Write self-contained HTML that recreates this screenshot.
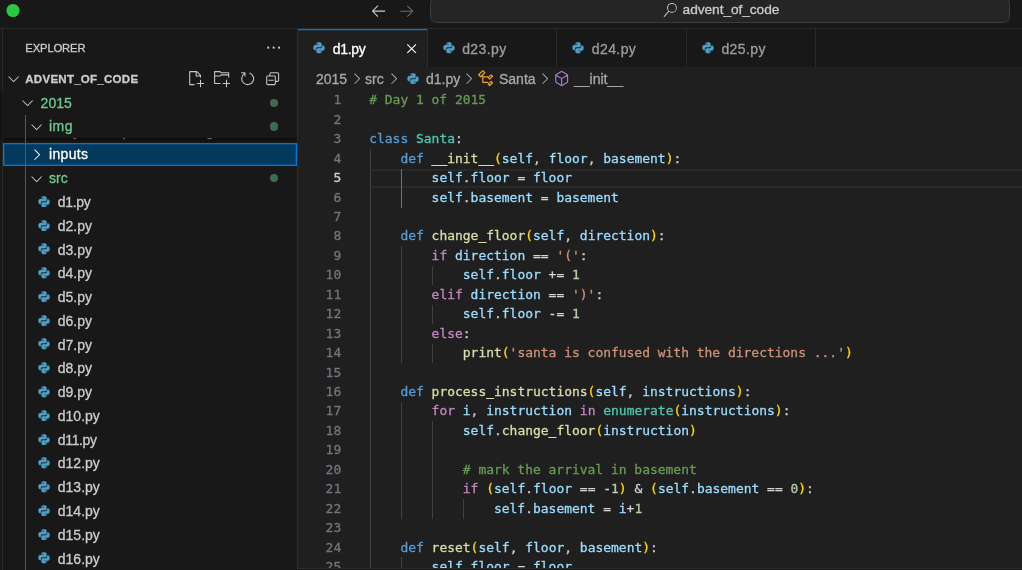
<!DOCTYPE html>
<html lang="en"><head><meta charset="utf-8"><title>d1.py — advent_of_code</title>
<style>
*{box-sizing:border-box;margin:0;padding:0}
html,body{width:1022px;height:570px;overflow:hidden;background:#1f1f1f}
body{position:relative;-webkit-text-stroke:0.3px;font-family:"Liberation Sans",sans-serif;font-size:14px;color:#cccccc;-webkit-font-smoothing:antialiased}
#root{position:absolute;left:0;top:0;width:1022px;height:570px;will-change:transform}
.abs,svg.ic,svg.py,.t{position:absolute}
.t{white-space:pre;line-height:1}
#title{position:absolute;left:0;top:0;width:1022px;height:29px;background:#181818;border-bottom:1px solid #2b2b2b}
#side{position:absolute;left:0;top:29px;width:298px;height:541px;background:#181818;border-right:1px solid #2b2b2b;overflow:hidden}
#ab{position:absolute;left:0;top:0;width:3px;height:541px;border-right:1px solid #2b2b2b}
#tabs{position:absolute;left:298px;top:29px;width:724px;height:37.8px;background:#181818}
.tab{position:absolute;top:0;height:37.8px;width:129.6px;border-right:1px solid #2b2b2b;color:#9d9d9d}
.tab.on{background:#1f1f1f;color:#ffffff}
.tab.on:before{content:'';position:absolute;left:0;top:0;width:128.6px;height:1px;background:#0078d4}
.tab.on:after{content:'';position:absolute;left:0;top:1px;width:128.6px;height:1px;background:rgba(0,120,212,.28)}
.row{position:absolute;left:3px;width:294px;height:23.77px}
.lbl{position:absolute;white-space:pre;line-height:23.77px;top:0.75px}
.g{color:#73c991}
.dot{position:absolute;width:8.4px;height:8.4px;border-radius:50%;background:#3f6b50}
#code{position:absolute;left:298px;top:90.9px;width:724px;height:477.1px;overflow:hidden;font-family:"DejaVu Sans Mono","Liberation Mono",monospace;font-size:12.96px}
.ln{position:absolute;left:0;width:43.2px;text-align:right;color:#6e7681;height:19.44px;line-height:19.44px;white-space:pre}
.ld{position:absolute;left:71.2px;height:19.44px;line-height:19.44px;white-space:pre}
.ig{position:absolute;width:1px;background:#404040}
.bc{position:absolute;top:67.8px;height:23.8px;line-height:23.8px;white-space:pre;color:#a9a9a9}
.cm{color:#6a9955}.kw{color:#569cd6}.cl{color:#4ec9b0}.fn{color:#dcdcaa}.v{color:#9cdcfe}.p{color:#cccccc}.ct{color:#c586c0}.s{color:#ce9178}.n{color:#b5cea8}.b{color:#ffd700}.o{color:#d4d4d4}</style></head><body><div id="root">
<div id="title"><svg class="ic" viewBox="0 0 30 24" style="left:0;top:0;width:30px;height:24px"><circle cx="13" cy="10.5" r="6.55" fill="#28c840"/></svg><svg class="ic" viewBox="0 0 16 16" style="left:369.9px;top:1.5px;width:17.3px;height:17.3px"><path fill="#cccccc" d="M7 3.093l-5 5V8.8l5 5 .707-.707-4.146-4.147H14v-1H3.56L7.708 3.8 7 3.093z"/></svg><svg class="ic" viewBox="0 0 16 16" style="left:398.4px;top:1.5px;width:17.3px;height:17.3px"><path fill="#6b6b6b" d="M9 13.887l5-5V8.18l-5-5-.707.707 4.146 4.147H2v1h10.44L8.292 13.18l.707.707z"/></svg><div class="abs" style="left:429.5px;top:-3px;width:580px;height:25.5px;border:1px solid #3c3c3c;border-radius:6.5px;background:#252525"></div><svg class="ic" viewBox="0 0 24 24" style="left:662.9px;top:2.9px;width:14.2px;height:14.2px"><path fill="#cccccc" d="M15.25 0a8.25 8.25 0 0 0-6.18 13.72L1 22.88l1.12 1.12 8.05-9.12A8.251 8.251 0 1 0 15.25.01V0zm0 15a6.75 6.75 0 1 1 0-13.5 6.75 6.75 0 0 1 0 13.5z"/></svg><span class="t" style="left:682.6px;top:1.9px;font-size:13.7px;line-height:16px;letter-spacing:-0.05px;color:#cccccc">advent_of_code</span></div>
<div id="side"><div id="ab"></div><span class="t" style="left:25.3px;top:13.0px;font-size:11.2px;line-height:12px;letter-spacing:-0.1px;color:#cccccc">EXPLORER</span><svg class="ic" viewBox="0 0 16 16" style="left:264.6px;top:10.3px;width:17.3px;height:17.3px"><path fill="#cccccc" d="M4 8a1 1 0 1 1-2 0 1 1 0 0 1 2 0zm5 0a1 1 0 1 1-2 0 1 1 0 0 1 2 0zm5 0a1 1 0 1 1-2 0 1 1 0 0 1 2 0z"/></svg><div class="row" style="top:89.84px"><svg class="py" viewBox="1.7 1.7 28.6 28.6" preserveAspectRatio="none" style="left:35.0px;top:5.6px;width:12.0px;height:11.6px"><path fill="#4f9fc6" stroke="#4f9fc6" stroke-width="0.35" stroke-linejoin="round" d="M15.6 2.5c-6 0-5.7 2.6-5.7 2.6v2.9h5.9v.9H6.900c0 0-4.400-.5-4.400 6.300s3.800 6.600 3.800 6.600h2.300v-3.200s-.1-3.800 3.700-3.800h6.300s3.600.1 3.600-3.500V6.100s.5-3.600-6.600-3.600zm-3.600 2c.6 0 1.100.5 1.100 1.100s-.5 1.100-1.100 1.100-1.100-.5-1.100-1.100.5-1.100 1.100-1.100z"/><path fill="#4f9fc6" stroke="#4f9fc6" stroke-width="0.35" stroke-linejoin="round" d="M16.400 29.500c6 0 5.700-2.600 5.700-2.600v-2.900h-5.900v-.9h8.900s4.400.5 4.400-6.300-3.800-6.600-3.800-6.600h-2.300v3.200s.1 3.800-3.700 3.800h-6.300s-3.600-.1-3.600 3.500v5.200s-.5 3.600 6.600 3.600zm3.600-2c-.6 0-1.100-.5-1.100-1.100s.5-1.100 1.100-1.100 1.100.5 1.100 1.100-.5 1.100-1.100 1.100z"/></svg><span class="lbl" style="left:54.8px">day08 lamp animations.gif</span></div><div class="row" style="top:113.61px;background:#04395e;box-shadow:inset 0 0 0 1px #0078d4,inset 0 0 0 2px rgba(0,120,212,.35)"><svg class="ic" viewBox="0 0 16 16" style="left:24.8px;top:3.2px;width:17.3px;height:17.3px"><path fill="#ffffff" d="M10.072 8.024L5.715 3.667l.618-.62L11 7.716v.618L6.333 13l-.618-.619 4.357-4.357z"/></svg><span class="lbl" style="left:46.0px;color:#ffffff;letter-spacing:0.35px">inputs</span></div><div class="row" style="top:137.42px"><svg class="ic" viewBox="0 0 16 16" style="left:24.8px;top:3.2px;width:17.3px;height:17.3px"><path fill="#cccccc" d="M7.976 10.072l4.357-4.357.62.618L8.284 11h-.618L3 6.333l.619-.618 4.357 4.357z"/></svg><span class="lbl g" style="left:46.0px">src</span><div class="dot" style="left:266.8px;top:7.7px"></div></div><div class="row" style="top:161.22px"><svg class="py" viewBox="1.7 1.7 28.6 28.6" preserveAspectRatio="none" style="left:35.0px;top:5.6px;width:12.0px;height:11.6px"><path fill="#4f9fc6" stroke="#4f9fc6" stroke-width="0.35" stroke-linejoin="round" d="M15.6 2.5c-6 0-5.7 2.6-5.7 2.6v2.9h5.9v.9H6.900c0 0-4.400-.5-4.400 6.300s3.800 6.600 3.800 6.600h2.300v-3.200s-.1-3.800 3.700-3.800h6.300s3.600.1 3.600-3.500V6.100s.5-3.600-6.600-3.600zm-3.600 2c.6 0 1.100.5 1.100 1.100s-.5 1.100-1.100 1.100-1.100-.5-1.100-1.100.5-1.100 1.100-1.100z"/><path fill="#4f9fc6" stroke="#4f9fc6" stroke-width="0.35" stroke-linejoin="round" d="M16.400 29.500c6 0 5.700-2.600 5.700-2.600v-2.900h-5.900v-.9h8.900s4.400.5 4.400-6.300-3.800-6.600-3.800-6.600h-2.300v3.200s.1 3.800-3.700 3.800h-6.300s-3.600-.1-3.600 3.500v5.200s-.5 3.600 6.600 3.600zm3.600-2c-.6 0-1.100-.5-1.100-1.100s.5-1.100 1.100-1.100 1.100.5 1.100 1.100-.5 1.100-1.100 1.100z"/></svg><span class="lbl" style="left:54.8px;letter-spacing:-0.3px">d1.py</span></div><div class="row" style="top:184.99px"><svg class="py" viewBox="1.7 1.7 28.6 28.6" preserveAspectRatio="none" style="left:35.0px;top:5.6px;width:12.0px;height:11.6px"><path fill="#4f9fc6" stroke="#4f9fc6" stroke-width="0.35" stroke-linejoin="round" d="M15.6 2.5c-6 0-5.7 2.6-5.7 2.6v2.9h5.9v.9H6.900c0 0-4.400-.5-4.400 6.300s3.800 6.600 3.800 6.600h2.300v-3.200s-.1-3.800 3.700-3.800h6.300s3.600.1 3.600-3.500V6.100s.5-3.600-6.600-3.600zm-3.600 2c.6 0 1.100.5 1.100 1.100s-.5 1.100-1.100 1.100-1.100-.5-1.100-1.100.5-1.100 1.100-1.100z"/><path fill="#4f9fc6" stroke="#4f9fc6" stroke-width="0.35" stroke-linejoin="round" d="M16.400 29.500c6 0 5.700-2.600 5.700-2.600v-2.900h-5.900v-.9h8.900s4.400.5 4.400-6.300-3.800-6.600-3.800-6.600h-2.300v3.200s.1 3.800-3.700 3.800h-6.300s-3.600-.1-3.600 3.500v5.200s-.5 3.600 6.600 3.600zm3.600-2c-.6 0-1.100-.5-1.100-1.100s.5-1.100 1.100-1.100 1.100.5 1.100 1.100-.5 1.100-1.100 1.100z"/></svg><span class="lbl" style="left:54.8px">d2.py</span></div><div class="row" style="top:208.75px"><svg class="py" viewBox="1.7 1.7 28.6 28.6" preserveAspectRatio="none" style="left:35.0px;top:5.6px;width:12.0px;height:11.6px"><path fill="#4f9fc6" stroke="#4f9fc6" stroke-width="0.35" stroke-linejoin="round" d="M15.6 2.5c-6 0-5.7 2.6-5.7 2.6v2.9h5.9v.9H6.900c0 0-4.400-.5-4.400 6.300s3.800 6.600 3.800 6.600h2.300v-3.200s-.1-3.800 3.700-3.800h6.300s3.600.1 3.600-3.500V6.100s.5-3.600-6.600-3.600zm-3.600 2c.6 0 1.100.5 1.100 1.100s-.5 1.100-1.100 1.100-1.100-.5-1.100-1.100.5-1.100 1.100-1.100z"/><path fill="#4f9fc6" stroke="#4f9fc6" stroke-width="0.35" stroke-linejoin="round" d="M16.400 29.500c6 0 5.700-2.600 5.700-2.600v-2.900h-5.900v-.9h8.900s4.400.5 4.400-6.300-3.800-6.600-3.800-6.600h-2.300v3.200s.1 3.800-3.700 3.800h-6.300s-3.600-.1-3.600 3.500v5.200s-.5 3.600 6.600 3.600zm3.600-2c-.6 0-1.100-.5-1.100-1.100s.5-1.100 1.100-1.100 1.100.5 1.100 1.100-.5 1.100-1.100 1.100z"/></svg><span class="lbl" style="left:54.8px">d3.py</span></div><div class="row" style="top:232.52px"><svg class="py" viewBox="1.7 1.7 28.6 28.6" preserveAspectRatio="none" style="left:35.0px;top:5.6px;width:12.0px;height:11.6px"><path fill="#4f9fc6" stroke="#4f9fc6" stroke-width="0.35" stroke-linejoin="round" d="M15.6 2.5c-6 0-5.7 2.6-5.7 2.6v2.9h5.9v.9H6.900c0 0-4.400-.5-4.400 6.300s3.800 6.600 3.800 6.600h2.300v-3.200s-.1-3.800 3.700-3.800h6.300s3.600.1 3.600-3.500V6.100s.5-3.600-6.600-3.600zm-3.600 2c.6 0 1.100.5 1.100 1.100s-.5 1.100-1.100 1.100-1.100-.5-1.100-1.100.5-1.100 1.100-1.100z"/><path fill="#4f9fc6" stroke="#4f9fc6" stroke-width="0.35" stroke-linejoin="round" d="M16.400 29.500c6 0 5.700-2.600 5.700-2.600v-2.900h-5.900v-.9h8.900s4.400.5 4.400-6.300-3.800-6.600-3.800-6.600h-2.300v3.200s.1 3.800-3.700 3.800h-6.300s-3.600-.1-3.600 3.500v5.200s-.5 3.600 6.600 3.600zm3.600-2c-.6 0-1.100-.5-1.100-1.100s.5-1.100 1.100-1.100 1.100.5 1.100 1.100-.5 1.100-1.100 1.100z"/></svg><span class="lbl" style="left:54.8px">d4.py</span></div><div class="row" style="top:256.30px"><svg class="py" viewBox="1.7 1.7 28.6 28.6" preserveAspectRatio="none" style="left:35.0px;top:5.6px;width:12.0px;height:11.6px"><path fill="#4f9fc6" stroke="#4f9fc6" stroke-width="0.35" stroke-linejoin="round" d="M15.6 2.5c-6 0-5.7 2.6-5.7 2.6v2.9h5.9v.9H6.900c0 0-4.400-.5-4.400 6.300s3.800 6.600 3.800 6.600h2.300v-3.200s-.1-3.800 3.700-3.800h6.300s3.600.1 3.600-3.500V6.100s.5-3.600-6.600-3.600zm-3.600 2c.6 0 1.100.5 1.100 1.100s-.5 1.100-1.100 1.100-1.100-.5-1.100-1.100.5-1.100 1.100-1.100z"/><path fill="#4f9fc6" stroke="#4f9fc6" stroke-width="0.35" stroke-linejoin="round" d="M16.400 29.500c6 0 5.700-2.600 5.700-2.600v-2.900h-5.900v-.9h8.900s4.400.5 4.400-6.300-3.800-6.600-3.800-6.600h-2.300v3.200s.1 3.800-3.700 3.800h-6.300s-3.600-.1-3.600 3.500v5.200s-.5 3.600 6.600 3.600zm3.600-2c-.6 0-1.100-.5-1.100-1.100s.5-1.100 1.100-1.100 1.100.5 1.100 1.100-.5 1.100-1.100 1.100z"/></svg><span class="lbl" style="left:54.8px">d5.py</span></div><div class="row" style="top:280.06px"><svg class="py" viewBox="1.7 1.7 28.6 28.6" preserveAspectRatio="none" style="left:35.0px;top:5.6px;width:12.0px;height:11.6px"><path fill="#4f9fc6" stroke="#4f9fc6" stroke-width="0.35" stroke-linejoin="round" d="M15.6 2.5c-6 0-5.7 2.6-5.7 2.6v2.9h5.9v.9H6.900c0 0-4.400-.5-4.400 6.300s3.800 6.600 3.800 6.600h2.300v-3.200s-.1-3.800 3.700-3.800h6.300s3.600.1 3.600-3.500V6.100s.5-3.600-6.600-3.600zm-3.600 2c.6 0 1.100.5 1.100 1.100s-.5 1.100-1.100 1.100-1.100-.5-1.100-1.100.5-1.100 1.100-1.100z"/><path fill="#4f9fc6" stroke="#4f9fc6" stroke-width="0.35" stroke-linejoin="round" d="M16.400 29.500c6 0 5.700-2.600 5.700-2.600v-2.900h-5.900v-.9h8.900s4.400.5 4.400-6.300-3.800-6.600-3.800-6.600h-2.300v3.200s.1 3.800-3.700 3.800h-6.300s-3.600-.1-3.600 3.500v5.200s-.5 3.600 6.600 3.600zm3.600-2c-.6 0-1.100-.5-1.100-1.100s.5-1.100 1.100-1.100 1.100.5 1.100 1.100-.5 1.100-1.100 1.100z"/></svg><span class="lbl" style="left:54.8px">d6.py</span></div><div class="row" style="top:303.84px"><svg class="py" viewBox="1.7 1.7 28.6 28.6" preserveAspectRatio="none" style="left:35.0px;top:5.6px;width:12.0px;height:11.6px"><path fill="#4f9fc6" stroke="#4f9fc6" stroke-width="0.35" stroke-linejoin="round" d="M15.6 2.5c-6 0-5.7 2.6-5.7 2.6v2.9h5.9v.9H6.900c0 0-4.400-.5-4.400 6.300s3.800 6.600 3.800 6.600h2.300v-3.200s-.1-3.800 3.700-3.800h6.300s3.600.1 3.600-3.500V6.100s.5-3.600-6.600-3.600zm-3.600 2c.6 0 1.100.5 1.100 1.100s-.5 1.100-1.100 1.100-1.100-.5-1.100-1.100.5-1.100 1.100-1.100z"/><path fill="#4f9fc6" stroke="#4f9fc6" stroke-width="0.35" stroke-linejoin="round" d="M16.400 29.500c6 0 5.700-2.600 5.700-2.600v-2.900h-5.900v-.9h8.900s4.400.5 4.400-6.300-3.800-6.600-3.800-6.600h-2.300v3.200s.1 3.800-3.700 3.800h-6.300s-3.600-.1-3.600 3.500v5.200s-.5 3.600 6.600 3.600zm3.600-2c-.6 0-1.100-.5-1.100-1.100s.5-1.100 1.100-1.100 1.100.5 1.100 1.100-.5 1.100-1.100 1.100z"/></svg><span class="lbl" style="left:54.8px">d7.py</span></div><div class="row" style="top:327.61px"><svg class="py" viewBox="1.7 1.7 28.6 28.6" preserveAspectRatio="none" style="left:35.0px;top:5.6px;width:12.0px;height:11.6px"><path fill="#4f9fc6" stroke="#4f9fc6" stroke-width="0.35" stroke-linejoin="round" d="M15.6 2.5c-6 0-5.7 2.6-5.7 2.6v2.9h5.9v.9H6.900c0 0-4.400-.5-4.400 6.300s3.800 6.600 3.800 6.600h2.300v-3.200s-.1-3.800 3.700-3.800h6.300s3.600.1 3.600-3.500V6.100s.5-3.600-6.600-3.600zm-3.600 2c.6 0 1.100.5 1.100 1.100s-.5 1.100-1.100 1.100-1.100-.5-1.100-1.100.5-1.100 1.100-1.100z"/><path fill="#4f9fc6" stroke="#4f9fc6" stroke-width="0.35" stroke-linejoin="round" d="M16.400 29.500c6 0 5.700-2.600 5.700-2.600v-2.900h-5.900v-.9h8.900s4.400.5 4.400-6.300-3.800-6.600-3.800-6.600h-2.300v3.200s.1 3.800-3.700 3.800h-6.300s-3.600-.1-3.600 3.500v5.200s-.5 3.600 6.600 3.600zm3.600-2c-.6 0-1.100-.5-1.100-1.100s.5-1.100 1.100-1.100 1.100.5 1.100 1.100-.5 1.100-1.100 1.100z"/></svg><span class="lbl" style="left:54.8px">d8.py</span></div><div class="row" style="top:351.38px"><svg class="py" viewBox="1.7 1.7 28.6 28.6" preserveAspectRatio="none" style="left:35.0px;top:5.6px;width:12.0px;height:11.6px"><path fill="#4f9fc6" stroke="#4f9fc6" stroke-width="0.35" stroke-linejoin="round" d="M15.6 2.5c-6 0-5.7 2.6-5.7 2.6v2.9h5.9v.9H6.900c0 0-4.400-.5-4.400 6.300s3.800 6.600 3.800 6.600h2.300v-3.200s-.1-3.800 3.700-3.800h6.300s3.600.1 3.600-3.500V6.100s.5-3.600-6.600-3.600zm-3.600 2c.6 0 1.100.5 1.100 1.100s-.5 1.100-1.100 1.100-1.100-.5-1.100-1.100.5-1.100 1.100-1.100z"/><path fill="#4f9fc6" stroke="#4f9fc6" stroke-width="0.35" stroke-linejoin="round" d="M16.400 29.500c6 0 5.700-2.600 5.700-2.600v-2.900h-5.900v-.9h8.900s4.400.5 4.400-6.300-3.800-6.600-3.800-6.600h-2.300v3.200s.1 3.800-3.700 3.800h-6.300s-3.600-.1-3.600 3.500v5.200s-.5 3.600 6.600 3.600zm3.600-2c-.6 0-1.100-.5-1.100-1.100s.5-1.100 1.100-1.100 1.100.5 1.100 1.100-.5 1.100-1.100 1.100z"/></svg><span class="lbl" style="left:54.8px">d9.py</span></div><div class="row" style="top:375.14px"><svg class="py" viewBox="1.7 1.7 28.6 28.6" preserveAspectRatio="none" style="left:35.0px;top:5.6px;width:12.0px;height:11.6px"><path fill="#4f9fc6" stroke="#4f9fc6" stroke-width="0.35" stroke-linejoin="round" d="M15.6 2.5c-6 0-5.7 2.6-5.7 2.6v2.9h5.9v.9H6.900c0 0-4.400-.5-4.400 6.300s3.800 6.600 3.800 6.600h2.300v-3.200s-.1-3.800 3.700-3.800h6.300s3.600.1 3.600-3.500V6.100s.5-3.600-6.600-3.600zm-3.600 2c.6 0 1.100.5 1.100 1.100s-.5 1.100-1.100 1.100-1.100-.5-1.100-1.100.5-1.100 1.100-1.100z"/><path fill="#4f9fc6" stroke="#4f9fc6" stroke-width="0.35" stroke-linejoin="round" d="M16.400 29.500c6 0 5.700-2.600 5.700-2.600v-2.900h-5.900v-.9h8.900s4.400.5 4.400-6.300-3.800-6.600-3.800-6.600h-2.300v3.200s.1 3.800-3.700 3.800h-6.300s-3.600-.1-3.600 3.500v5.200s-.5 3.600 6.600 3.600zm3.600-2c-.6 0-1.100-.5-1.100-1.100s.5-1.100 1.100-1.100 1.100.5 1.100 1.100-.5 1.100-1.100 1.100z"/></svg><span class="lbl" style="left:54.8px">d10.py</span></div><div class="row" style="top:398.91px"><svg class="py" viewBox="1.7 1.7 28.6 28.6" preserveAspectRatio="none" style="left:35.0px;top:5.6px;width:12.0px;height:11.6px"><path fill="#4f9fc6" stroke="#4f9fc6" stroke-width="0.35" stroke-linejoin="round" d="M15.6 2.5c-6 0-5.7 2.6-5.7 2.6v2.9h5.9v.9H6.900c0 0-4.400-.5-4.400 6.300s3.800 6.600 3.800 6.600h2.300v-3.200s-.1-3.800 3.700-3.800h6.300s3.600.1 3.600-3.500V6.100s.5-3.600-6.600-3.600zm-3.600 2c.6 0 1.100.5 1.100 1.100s-.5 1.100-1.100 1.100-1.100-.5-1.100-1.100.5-1.100 1.100-1.100z"/><path fill="#4f9fc6" stroke="#4f9fc6" stroke-width="0.35" stroke-linejoin="round" d="M16.400 29.500c6 0 5.700-2.600 5.700-2.600v-2.900h-5.900v-.9h8.900s4.400.5 4.400-6.300-3.800-6.600-3.800-6.600h-2.300v3.200s.1 3.800-3.700 3.800h-6.300s-3.600-.1-3.600 3.500v5.200s-.5 3.600 6.600 3.600zm3.600-2c-.6 0-1.100-.5-1.100-1.100s.5-1.100 1.100-1.100 1.100.5 1.100 1.100-.5 1.100-1.100 1.100z"/></svg><span class="lbl" style="left:54.8px;letter-spacing:-0.35px">d11.py</span></div><div class="row" style="top:422.68px"><svg class="py" viewBox="1.7 1.7 28.6 28.6" preserveAspectRatio="none" style="left:35.0px;top:5.6px;width:12.0px;height:11.6px"><path fill="#4f9fc6" stroke="#4f9fc6" stroke-width="0.35" stroke-linejoin="round" d="M15.6 2.5c-6 0-5.7 2.6-5.7 2.6v2.9h5.9v.9H6.900c0 0-4.400-.5-4.400 6.300s3.800 6.600 3.800 6.600h2.300v-3.200s-.1-3.800 3.700-3.800h6.300s3.600.1 3.600-3.500V6.100s.5-3.600-6.600-3.600zm-3.600 2c.6 0 1.100.5 1.100 1.100s-.5 1.100-1.100 1.100-1.100-.5-1.100-1.100.5-1.100 1.100-1.100z"/><path fill="#4f9fc6" stroke="#4f9fc6" stroke-width="0.35" stroke-linejoin="round" d="M16.400 29.500c6 0 5.700-2.600 5.700-2.600v-2.900h-5.900v-.9h8.900s4.400.5 4.400-6.300-3.800-6.600-3.800-6.600h-2.300v3.200s.1 3.800-3.700 3.800h-6.300s-3.600-.1-3.600 3.500v5.200s-.5 3.600 6.600 3.600zm3.600-2c-.6 0-1.100-.5-1.100-1.100s.5-1.100 1.100-1.100 1.100.5 1.100 1.100-.5 1.100-1.100 1.100z"/></svg><span class="lbl" style="left:54.8px">d12.py</span></div><div class="row" style="top:446.46px"><svg class="py" viewBox="1.7 1.7 28.6 28.6" preserveAspectRatio="none" style="left:35.0px;top:5.6px;width:12.0px;height:11.6px"><path fill="#4f9fc6" stroke="#4f9fc6" stroke-width="0.35" stroke-linejoin="round" d="M15.6 2.5c-6 0-5.7 2.6-5.7 2.6v2.9h5.9v.9H6.900c0 0-4.400-.5-4.400 6.300s3.800 6.600 3.800 6.600h2.300v-3.200s-.1-3.800 3.700-3.800h6.300s3.600.1 3.600-3.500V6.100s.5-3.600-6.600-3.600zm-3.600 2c.6 0 1.100.5 1.100 1.100s-.5 1.100-1.100 1.100-1.100-.5-1.100-1.100.5-1.100 1.100-1.100z"/><path fill="#4f9fc6" stroke="#4f9fc6" stroke-width="0.35" stroke-linejoin="round" d="M16.400 29.500c6 0 5.700-2.600 5.700-2.600v-2.900h-5.900v-.9h8.900s4.400.5 4.400-6.300-3.800-6.600-3.800-6.600h-2.300v3.200s.1 3.800-3.700 3.800h-6.300s-3.600-.1-3.600 3.500v5.200s-.5 3.600 6.600 3.600zm3.600-2c-.6 0-1.100-.5-1.100-1.100s.5-1.100 1.100-1.100 1.100.5 1.100 1.100-.5 1.100-1.100 1.100z"/></svg><span class="lbl" style="left:54.8px">d13.py</span></div><div class="row" style="top:470.23px"><svg class="py" viewBox="1.7 1.7 28.6 28.6" preserveAspectRatio="none" style="left:35.0px;top:5.6px;width:12.0px;height:11.6px"><path fill="#4f9fc6" stroke="#4f9fc6" stroke-width="0.35" stroke-linejoin="round" d="M15.6 2.5c-6 0-5.7 2.6-5.7 2.6v2.9h5.9v.9H6.900c0 0-4.400-.5-4.400 6.300s3.800 6.600 3.800 6.600h2.300v-3.200s-.1-3.800 3.700-3.800h6.300s3.600.1 3.600-3.500V6.100s.5-3.600-6.600-3.600zm-3.600 2c.6 0 1.100.5 1.100 1.100s-.5 1.100-1.100 1.100-1.100-.5-1.100-1.100.5-1.100 1.100-1.100z"/><path fill="#4f9fc6" stroke="#4f9fc6" stroke-width="0.35" stroke-linejoin="round" d="M16.400 29.500c6 0 5.700-2.600 5.700-2.600v-2.900h-5.900v-.9h8.900s4.400.5 4.400-6.300-3.800-6.600-3.800-6.600h-2.300v3.200s.1 3.800-3.700 3.800h-6.300s-3.600-.1-3.600 3.500v5.200s-.5 3.600 6.600 3.600zm3.600-2c-.6 0-1.100-.5-1.100-1.100s.5-1.100 1.100-1.100 1.100.5 1.100 1.100-.5 1.100-1.100 1.100z"/></svg><span class="lbl" style="left:54.8px">d14.py</span></div><div class="row" style="top:494.00px"><svg class="py" viewBox="1.7 1.7 28.6 28.6" preserveAspectRatio="none" style="left:35.0px;top:5.6px;width:12.0px;height:11.6px"><path fill="#4f9fc6" stroke="#4f9fc6" stroke-width="0.35" stroke-linejoin="round" d="M15.6 2.5c-6 0-5.7 2.6-5.7 2.6v2.9h5.9v.9H6.900c0 0-4.400-.5-4.400 6.300s3.800 6.600 3.800 6.600h2.300v-3.200s-.1-3.800 3.700-3.800h6.300s3.600.1 3.600-3.500V6.100s.5-3.600-6.600-3.600zm-3.600 2c.6 0 1.100.5 1.100 1.100s-.5 1.100-1.100 1.100-1.100-.5-1.100-1.100.5-1.100 1.100-1.100z"/><path fill="#4f9fc6" stroke="#4f9fc6" stroke-width="0.35" stroke-linejoin="round" d="M16.400 29.500c6 0 5.700-2.600 5.700-2.600v-2.900h-5.900v-.9h8.900s4.400.5 4.400-6.300-3.800-6.600-3.800-6.600h-2.300v3.200s.1 3.800-3.700 3.800h-6.300s-3.600-.1-3.600 3.500v5.200s-.5 3.600 6.600 3.600zm3.600-2c-.6 0-1.100-.5-1.100-1.100s.5-1.100 1.100-1.100 1.100.5 1.100 1.100-.5 1.100-1.100 1.100z"/></svg><span class="lbl" style="left:54.8px">d15.py</span></div><div class="row" style="top:517.76px"><svg class="py" viewBox="1.7 1.7 28.6 28.6" preserveAspectRatio="none" style="left:35.0px;top:5.6px;width:12.0px;height:11.6px"><path fill="#4f9fc6" stroke="#4f9fc6" stroke-width="0.35" stroke-linejoin="round" d="M15.6 2.5c-6 0-5.7 2.6-5.7 2.6v2.9h5.9v.9H6.900c0 0-4.400-.5-4.400 6.300s3.800 6.600 3.800 6.600h2.300v-3.200s-.1-3.800 3.700-3.800h6.300s3.600.1 3.600-3.500V6.100s.5-3.600-6.600-3.600zm-3.600 2c.6 0 1.100.5 1.100 1.100s-.5 1.100-1.100 1.100-1.100-.5-1.100-1.100.5-1.100 1.100-1.100z"/><path fill="#4f9fc6" stroke="#4f9fc6" stroke-width="0.35" stroke-linejoin="round" d="M16.400 29.500c6 0 5.700-2.600 5.700-2.600v-2.900h-5.900v-.9h8.900s4.400.5 4.400-6.300-3.800-6.600-3.800-6.600h-2.300v3.200s.1 3.800-3.700 3.800h-6.300s-3.600-.1-3.600 3.500v5.200s-.5 3.600 6.600 3.600zm3.600-2c-.6 0-1.100-.5-1.100-1.100s.5-1.100 1.100-1.100 1.100.5 1.100 1.100-.5 1.100-1.100 1.100z"/></svg><span class="lbl" style="left:54.8px">d16.py</span></div><div class="abs" style="left:3px;top:62px;width:294px;height:46.6px;background:#181818;box-shadow:0 1px 4px 1px rgba(0,0,0,.6)"></div><div class="row" style="top:61.91px"><svg class="ic" viewBox="0 0 16 16" style="left:16.4px;top:3.2px;width:17.3px;height:17.3px"><path fill="#cccccc" d="M7.976 10.072l4.357-4.357.62.618L8.284 11h-.618L3 6.333l.619-.618 4.357 4.357z"/></svg><span class="lbl g" style="left:37.6px">2015</span><div class="dot" style="left:266.8px;top:7.7px"></div></div><div class="row" style="top:85.71px"><svg class="ic" viewBox="0 0 16 16" style="left:24.8px;top:3.2px;width:17.3px;height:17.3px"><path fill="#cccccc" d="M7.976 10.072l4.357-4.357.62.618L8.284 11h-.618L3 6.333l.619-.618 4.357 4.357z"/></svg><span class="lbl g" style="left:46.0px;letter-spacing:0.5px">img</span><div class="dot" style="left:266.8px;top:7.7px"></div></div><div class="abs" style="left:3px;top:38px;width:294px;height:24px;background:#181818"></div><svg class="ic" viewBox="0 0 16 16" style="left:5.3px;top:41.4px;width:17.3px;height:17.3px"><path fill="#cccccc" d="M7.976 10.072l4.357-4.357.62.618L8.284 11h-.618L3 6.333l.619-.618 4.357 4.357z"/></svg><span class="t" style="left:25.3px;top:44.0px;font-size:11.5px;line-height:12px;letter-spacing:0.27px;font-weight:bold;color:#cccccc">ADVENT_OF_CODE</span><svg class="ic" viewBox="0 0 16 16" style="left:186.5px;top:41.4px;width:17.3px;height:17.3px"><path fill="#c5c5c5" d="M9.5 1.1l3.4 3.5.1.4v2h-1V6H8V2H3v11h4v1H2.5l-.5-.5v-12l.5-.5h6.7l.3.1zM9 2v3h2.9L9 2zm4 14h-1v-3H9v-1h3V9h1v3h3v1h-3v3z"/></svg><svg class="ic" viewBox="0 0 16 16" style="left:212.8px;top:41.4px;width:17.3px;height:17.3px"><path fill="#c5c5c5" d="M14.5 2H7.71l-.85-.85L6.51 1h-5l-.5.5v11l.5.5H7v-1H1.99V6h4.49l.35-.15.86-.86H14v1.5l-.001.51h1.011V2.5L14.5 2zm-.51 2h-6.5l-.35.15-.86.86H2v-3h4.29l.85.85.36.15H14l-.01.99zM13 16h-1v-3H9v-1h3V9h1v3h3v1h-3v3z"/></svg><svg class="ic" viewBox="0 0 16 16" style="left:238.8px;top:41.1px;width:17.3px;height:17.3px"><path fill="#c5c5c5" d="M4.681 3H2V2h3.5l.5.5V6H5V4a5 5 0 1 0 4.53-.761l.302-.954A6 6 0 1 1 4.681 3z"/></svg><svg class="ic" viewBox="0 0 16 16" style="left:264.4px;top:41.1px;width:17.3px;height:17.3px"><path fill="#c5c5c5" d="M9 9H4v1h5V9zM5 3l1-1h7l1 1v7l-1 1h-2v2l-1 1H3l-1-1V6l1-1h2V3zm1 2h4l1 1v4h2V3H6v2zm4 1H3v7h7V6z"/></svg><div class="abs" style="left:25px;top:85.7px;width:1px;height:460px;background:#585858"></div></div>
<div id="tabs"><div class="tab on" style="left:0.0px"><svg class="py" viewBox="1.7 1.7 28.6 28.6" preserveAspectRatio="none" style="left:15.2px;top:13.0px;width:12.0px;height:11.6px"><path fill="#4f9fc6" stroke="#4f9fc6" stroke-width="0.35" stroke-linejoin="round" d="M15.6 2.5c-6 0-5.7 2.6-5.7 2.6v2.9h5.9v.9H6.900c0 0-4.400-.5-4.400 6.300s3.800 6.600 3.800 6.600h2.300v-3.200s-.1-3.800 3.700-3.800h6.300s3.600.1 3.600-3.500V6.100s.5-3.600-6.600-3.600zm-3.600 2c.6 0 1.100.5 1.100 1.100s-.5 1.100-1.100 1.100-1.100-.5-1.100-1.100.5-1.100 1.100-1.100z"/><path fill="#4f9fc6" stroke="#4f9fc6" stroke-width="0.35" stroke-linejoin="round" d="M16.400 29.500c6 0 5.700-2.600 5.700-2.600v-2.900h-5.900v-.9h8.900s4.400.5 4.400-6.300-3.800-6.600-3.800-6.600h-2.300v3.200s.1 3.800-3.700 3.800h-6.300s-3.600-.1-3.600 3.500v5.200s-.5 3.600 6.600 3.600zm3.600-2c-.6 0-1.100-.5-1.100-1.100s.5-1.100 1.100-1.100 1.100.5 1.100 1.100-.5 1.100-1.100 1.100z"/></svg><span class="t" style="left:34.8px;top:11.6px;line-height:16px;letter-spacing:-0.3px">d1.py</span><svg class="ic" viewBox="0 0 16 16" style="left:104.6px;top:10.5px;width:17.3px;height:17.3px"><path fill="#ffffff" d="M8 8.707l3.646 3.647.708-.707L8.707 8l3.647-3.646-.707-.708L8 7.293 4.354 3.646l-.707.708L7.293 8l-3.646 3.646.707.708L8 8.707z"/></svg></div><div class="tab" style="left:129.6px"><svg class="py" viewBox="1.7 1.7 28.6 28.6" preserveAspectRatio="none" style="left:15.2px;top:13.0px;width:12.0px;height:11.6px"><path fill="#4f9fc6" stroke="#4f9fc6" stroke-width="0.35" stroke-linejoin="round" d="M15.6 2.5c-6 0-5.7 2.6-5.7 2.6v2.9h5.9v.9H6.900c0 0-4.400-.5-4.400 6.300s3.800 6.600 3.800 6.600h2.300v-3.200s-.1-3.800 3.700-3.800h6.300s3.600.1 3.600-3.500V6.100s.5-3.600-6.600-3.600zm-3.600 2c.6 0 1.100.5 1.100 1.100s-.5 1.100-1.100 1.100-1.100-.5-1.100-1.100.5-1.100 1.100-1.100z"/><path fill="#4f9fc6" stroke="#4f9fc6" stroke-width="0.35" stroke-linejoin="round" d="M16.400 29.500c6 0 5.700-2.600 5.700-2.600v-2.900h-5.900v-.9h8.900s4.400.5 4.400-6.300-3.800-6.600-3.800-6.600h-2.300v3.200s.1 3.800-3.700 3.800h-6.300s-3.600-.1-3.600 3.500v5.200s-.5 3.600 6.600 3.600zm3.600-2c-.6 0-1.100-.5-1.100-1.100s.5-1.100 1.100-1.100 1.100.5 1.100 1.100-.5 1.100-1.100 1.100z"/></svg><span class="t" style="left:34.6px;top:11.6px;line-height:16px;letter-spacing:0.4px">d23.py</span></div><div class="tab" style="left:259.2px"><svg class="py" viewBox="1.7 1.7 28.6 28.6" preserveAspectRatio="none" style="left:15.2px;top:13.0px;width:12.0px;height:11.6px"><path fill="#4f9fc6" stroke="#4f9fc6" stroke-width="0.35" stroke-linejoin="round" d="M15.6 2.5c-6 0-5.7 2.6-5.7 2.6v2.9h5.9v.9H6.900c0 0-4.400-.5-4.400 6.300s3.800 6.600 3.800 6.600h2.300v-3.200s-.1-3.800 3.700-3.800h6.300s3.600.1 3.600-3.500V6.100s.5-3.600-6.600-3.600zm-3.600 2c.6 0 1.100.5 1.100 1.100s-.5 1.100-1.100 1.100-1.100-.5-1.100-1.100.5-1.100 1.100-1.100z"/><path fill="#4f9fc6" stroke="#4f9fc6" stroke-width="0.35" stroke-linejoin="round" d="M16.400 29.500c6 0 5.700-2.600 5.700-2.600v-2.900h-5.900v-.9h8.900s4.400.5 4.400-6.300-3.800-6.600-3.800-6.600h-2.300v3.200s.1 3.800-3.700 3.800h-6.300s-3.600-.1-3.600 3.500v5.200s-.5 3.600 6.600 3.600zm3.600-2c-.6 0-1.100-.5-1.100-1.100s.5-1.100 1.100-1.100 1.100.5 1.100 1.100-.5 1.100-1.100 1.100z"/></svg><span class="t" style="left:34.6px;top:11.6px;line-height:16px;letter-spacing:0.4px">d24.py</span></div><div class="tab" style="left:388.8px"><svg class="py" viewBox="1.7 1.7 28.6 28.6" preserveAspectRatio="none" style="left:15.2px;top:13.0px;width:12.0px;height:11.6px"><path fill="#4f9fc6" stroke="#4f9fc6" stroke-width="0.35" stroke-linejoin="round" d="M15.6 2.5c-6 0-5.7 2.6-5.7 2.6v2.9h5.9v.9H6.900c0 0-4.400-.5-4.400 6.300s3.800 6.600 3.800 6.600h2.300v-3.200s-.1-3.800 3.700-3.800h6.300s3.600.1 3.600-3.500V6.100s.5-3.600-6.600-3.600zm-3.600 2c.6 0 1.100.5 1.100 1.100s-.5 1.100-1.100 1.100-1.100-.5-1.100-1.100.5-1.100 1.100-1.100z"/><path fill="#4f9fc6" stroke="#4f9fc6" stroke-width="0.35" stroke-linejoin="round" d="M16.400 29.500c6 0 5.700-2.600 5.700-2.600v-2.900h-5.900v-.9h8.900s4.400.5 4.400-6.300-3.800-6.600-3.800-6.600h-2.300v3.200s.1 3.800-3.700 3.800h-6.300s-3.600-.1-3.600 3.500v5.200s-.5 3.600 6.600 3.600zm3.600-2c-.6 0-1.100-.5-1.100-1.100s.5-1.100 1.100-1.100 1.100.5 1.100 1.100-.5 1.100-1.100 1.100z"/></svg><span class="t" style="left:34.6px;top:11.6px;line-height:16px;letter-spacing:0.4px">d25.py</span></div></div>
<span class="bc" style="left:316px">2015</span><svg class="ic" viewBox="0 0 16 16" style="left:347.9px;top:70.2px;width:17.3px;height:17.3px"><path fill="#a9a9a9" d="M10.072 8.024L5.715 3.667l.618-.62L11 7.716v.618L6.333 13l-.618-.619 4.357-4.357z"/></svg><span class="bc" style="left:365px">src</span><svg class="ic" viewBox="0 0 16 16" style="left:385.4px;top:70.2px;width:17.3px;height:17.3px"><path fill="#a9a9a9" d="M10.072 8.024L5.715 3.667l.618-.62L11 7.716v.618L6.333 13l-.618-.619 4.357-4.357z"/></svg><svg class="py" viewBox="1.7 1.7 28.6 28.6" preserveAspectRatio="none" style="left:407.0px;top:72.6px;width:12.0px;height:11.6px"><path fill="#4f9fc6" stroke="#4f9fc6" stroke-width="0.35" stroke-linejoin="round" d="M15.6 2.5c-6 0-5.7 2.6-5.7 2.6v2.9h5.9v.9H6.900c0 0-4.400-.5-4.400 6.300s3.800 6.600 3.800 6.600h2.300v-3.200s-.1-3.800 3.700-3.800h6.300s3.600.1 3.600-3.500V6.100s.5-3.600-6.600-3.600zm-3.600 2c.6 0 1.100.5 1.100 1.100s-.5 1.100-1.100 1.100-1.100-.5-1.100-1.100.5-1.100 1.100-1.100z"/><path fill="#4f9fc6" stroke="#4f9fc6" stroke-width="0.35" stroke-linejoin="round" d="M16.400 29.500c6 0 5.700-2.600 5.700-2.600v-2.900h-5.900v-.9h8.900s4.400.5 4.400-6.300-3.800-6.600-3.800-6.600h-2.300v3.200s.1 3.800-3.700 3.800h-6.300s-3.600-.1-3.600 3.500v5.200s-.5 3.600 6.600 3.600zm3.600-2c-.6 0-1.100-.5-1.100-1.100s.5-1.100 1.100-1.100 1.100.5 1.100 1.100-.5 1.100-1.100 1.100z"/></svg><span class="bc" style="left:426px">d1.py</span><svg class="ic" viewBox="0 0 16 16" style="left:460.4px;top:70.2px;width:17.3px;height:17.3px"><path fill="#a9a9a9" d="M10.072 8.024L5.715 3.667l.618-.62L11 7.716v.618L6.333 13l-.618-.619 4.357-4.357z"/></svg><svg class="ic" viewBox="0 0 16 16" style="left:477.4px;top:69.3px;width:17.3px;height:17.3px"><g fill="none" stroke="#ee9d28" stroke-width="1.15" stroke-linejoin="round"><path d="M5.36 1.5L7.22 3.36 3.36 7.22 1.5 5.36z"/><path d="M5.35 5.6v6.75h5.1M5.35 7.31h5.1"/><path d="M13.02 5.4l1.3 1.3-2.62 2.62-1.3-1.3z"/><path d="M13.02 11.4l1.3 1.3-2.62 2.62-1.3-1.3z"/></g></svg><span class="bc" style="left:499px">Santa</span><svg class="ic" viewBox="0 0 16 16" style="left:536.4px;top:70.2px;width:17.3px;height:17.3px"><path fill="#a9a9a9" d="M10.072 8.024L5.715 3.667l.618-.62L11 7.716v.618L6.333 13l-.618-.619 4.357-4.357z"/></svg><svg class="ic" viewBox="0 0 16 16" style="left:552.9px;top:70.0px;width:17.3px;height:17.3px"><path fill="#b180d7" d="M13.51 4l-5-3h-1l-5 3-.49.86v6l.49.85 5 3h1l5-3 .49-.85v-6L13.51 4zm-6 9.56l-4.5-2.7V5.7l4.5 2.45v5.41zM3.27 4.7l4.74-2.84 4.74 2.84-4.74 2.59L3.27 4.7zm9.74 6.16l-4.5 2.7V8.15l4.5-2.45v5.16z"/></svg><span class="bc" style="left:574px">__init__</span>
<div id="code"><div class="abs" style="left:71.5px;top:77.76px;width:660px;height:19.44px;border-top:2px solid #292929;border-bottom:2px solid #292929"></div><div class="ig" style="left:71.5px;top:58.32px;height:427.68px"></div><div class="ig" style="left:102.7px;top:77.76px;height:38.88px;background:#707070"></div><div class="ig" style="left:102.7px;top:155.52px;height:116.64px"></div><div class="ig" style="left:102.7px;top:311.04px;height:116.64px"></div><div class="ig" style="left:102.7px;top:466.56px;height:19.44px"></div><div class="ig" style="left:133.9px;top:174.96px;height:19.44px"></div><div class="ig" style="left:133.9px;top:213.84px;height:19.44px"></div><div class="ig" style="left:133.9px;top:252.72px;height:19.44px"></div><div class="ig" style="left:133.9px;top:330.48px;height:97.20px"></div><div class="ig" style="left:165.1px;top:408.24px;height:19.44px"></div><div class="ln" style="top:-0.50px">1</div><div class="ld" style="top:-0.50px"><span class="cm"># Day 1 of 2015</span></div><div class="ln" style="top:18.94px">2</div><div class="ln" style="top:38.38px">3</div><div class="ld" style="top:38.38px"><span class="kw">class</span><span class="p"> </span><span class="cl">Santa</span><span class="p">:</span></div><div class="ln" style="top:57.82px">4</div><div class="ld" style="top:57.82px"><span class="p">    </span><span class="kw">def</span><span class="p"> </span><span class="fn">__init__</span><span class="b">(</span><span class="v">self</span><span class="p">, </span><span class="v">floor</span><span class="p">, </span><span class="v">basement</span><span class="b">)</span><span class="p">:</span></div><div class="ln" style="top:77.26px;color:#cccccc">5</div><div class="ld" style="top:77.26px"><span class="p">        </span><span class="v">self</span><span class="p">.</span><span class="v">floor</span><span class="o"> = </span><span class="v">floor</span></div><div class="ln" style="top:96.70px">6</div><div class="ld" style="top:96.70px"><span class="p">        </span><span class="v">self</span><span class="p">.</span><span class="v">basement</span><span class="o"> = </span><span class="v">basement</span></div><div class="ln" style="top:116.14px">7</div><div class="ln" style="top:135.58px">8</div><div class="ld" style="top:135.58px"><span class="p">    </span><span class="kw">def</span><span class="p"> </span><span class="fn">change_floor</span><span class="b">(</span><span class="v">self</span><span class="p">, </span><span class="v">direction</span><span class="b">)</span><span class="p">:</span></div><div class="ln" style="top:155.02px">9</div><div class="ld" style="top:155.02px"><span class="p">        </span><span class="ct">if</span><span class="p"> </span><span class="v">direction</span><span class="o"> == </span><span class="s">'('</span><span class="p">:</span></div><div class="ln" style="top:174.46px">10</div><div class="ld" style="top:174.46px"><span class="p">            </span><span class="v">self</span><span class="p">.</span><span class="v">floor</span><span class="o"> += </span><span class="n">1</span></div><div class="ln" style="top:193.90px">11</div><div class="ld" style="top:193.90px"><span class="p">        </span><span class="ct">elif</span><span class="p"> </span><span class="v">direction</span><span class="o"> == </span><span class="s">')'</span><span class="p">:</span></div><div class="ln" style="top:213.34px">12</div><div class="ld" style="top:213.34px"><span class="p">            </span><span class="v">self</span><span class="p">.</span><span class="v">floor</span><span class="o"> -= </span><span class="n">1</span></div><div class="ln" style="top:232.78px">13</div><div class="ld" style="top:232.78px"><span class="p">        </span><span class="ct">else</span><span class="p">:</span></div><div class="ln" style="top:252.22px">14</div><div class="ld" style="top:252.22px"><span class="p">            </span><span class="fn">print</span><span class="b">(</span><span class="s">'santa is confused with the directions ...'</span><span class="b">)</span></div><div class="ln" style="top:271.66px">15</div><div class="ln" style="top:291.10px">16</div><div class="ld" style="top:291.10px"><span class="p">    </span><span class="kw">def</span><span class="p"> </span><span class="fn">process_instructions</span><span class="b">(</span><span class="v">self</span><span class="p">, </span><span class="v">instructions</span><span class="b">)</span><span class="p">:</span></div><div class="ln" style="top:310.54px">17</div><div class="ld" style="top:310.54px"><span class="p">        </span><span class="ct">for</span><span class="p"> </span><span class="v">i</span><span class="p">, </span><span class="v">instruction</span><span class="p"> </span><span class="ct">in</span><span class="p"> </span><span class="cl">enumerate</span><span class="b">(</span><span class="v">instructions</span><span class="b">)</span><span class="p">:</span></div><div class="ln" style="top:329.98px">18</div><div class="ld" style="top:329.98px"><span class="p">            </span><span class="v">self</span><span class="p">.</span><span class="fn">change_floor</span><span class="b">(</span><span class="v">instruction</span><span class="b">)</span></div><div class="ln" style="top:349.42px">19</div><div class="ln" style="top:368.86px">20</div><div class="ld" style="top:368.86px"><span class="p">            </span><span class="cm"># mark the arrival in basement</span></div><div class="ln" style="top:388.30px">21</div><div class="ld" style="top:388.30px"><span class="p">            </span><span class="ct">if</span><span class="p"> </span><span class="b">(</span><span class="v">self</span><span class="p">.</span><span class="v">floor</span><span class="o"> == -</span><span class="n">1</span><span class="b">)</span><span class="o"> &amp; </span><span class="b">(</span><span class="v">self</span><span class="p">.</span><span class="v">basement</span><span class="o"> == </span><span class="n">0</span><span class="b">)</span><span class="p">:</span></div><div class="ln" style="top:407.74px">22</div><div class="ld" style="top:407.74px"><span class="p">                </span><span class="v">self</span><span class="p">.</span><span class="v">basement</span><span class="o"> = </span><span class="v">i</span><span class="o">+</span><span class="n">1</span></div><div class="ln" style="top:427.18px">23</div><div class="ln" style="top:446.62px">24</div><div class="ld" style="top:446.62px"><span class="p">    </span><span class="kw">def</span><span class="p"> </span><span class="fn">reset</span><span class="b">(</span><span class="v">self</span><span class="p">, </span><span class="v">floor</span><span class="p">, </span><span class="v">basement</span><span class="b">)</span><span class="p">:</span></div><div class="ln" style="top:466.06px">25</div><div class="ld" style="top:466.06px"><span class="p">        </span><span class="v">self</span><span class="p">.</span><span class="v">floor</span><span class="o"> = </span><span class="v">floor</span></div></div>
<div class="abs" style="left:298px;top:568px;width:724px;height:2px;background:#181818;border-top:1px solid #2b2b2b"></div>
</div></body></html>
